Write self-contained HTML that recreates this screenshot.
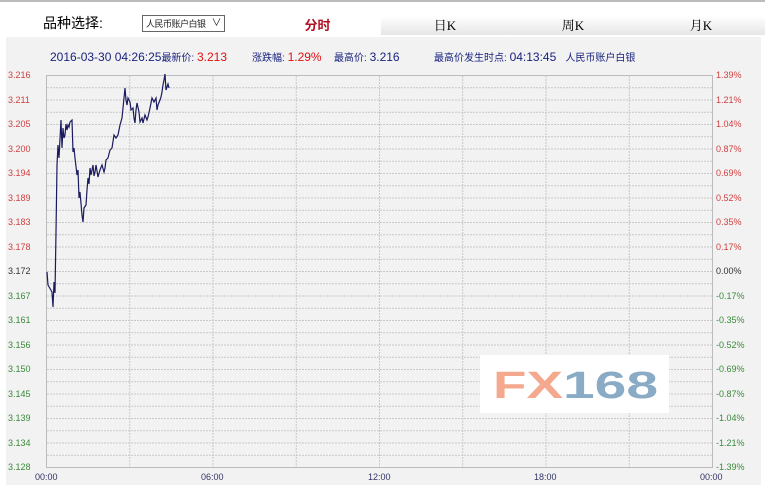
<!DOCTYPE html>
<html><head><meta charset="utf-8"><style>
body{margin:0;width:765px;height:488px;background:#fff;font-family:"Liberation Sans","Noto Sans CJK SC",sans-serif;position:relative;overflow:hidden}
.top{position:absolute;left:0;top:0;width:765px;height:2px;background:#bbb}
.lbl{position:absolute;left:43px;top:13px;font-size:14px;color:#000}
.sel{position:absolute;left:142px;top:15px;width:83px;height:17px;border:1px solid #666;font-size:9px;line-height:16px;box-sizing:border-box;padding-left:3px;color:#222;overflow:hidden;white-space:nowrap;letter-spacing:-0.5px}
.sel span{position:absolute;right:3px;top:0;font-size:10px}
.tabs{position:absolute;left:254px;top:16px;width:511px;height:19px}
.tab{position:absolute;top:0;height:19px;line-height:19px;font-size:13px;text-align:center;background:linear-gradient(#fff,#e6e6e6);font-family:"Liberation Serif","Noto Serif CJK SC",serif}
.panel{position:absolute;left:6px;top:37px;width:755px;height:448px;background:#f2f2f2}
.info{position:absolute;top:49px;font-size:11px;color:#1a237e;white-space:nowrap}
.r{color:#e01010}
.yl{position:absolute;font-size:9px;left:8px}
.yr{position:absolute;font-size:9px;left:716px}
.xl{position:absolute;top:472px;font-size:9px;color:#333366}
</style></head><body>
<div class="top"></div>
<div class="lbl">品种选择:</div>
<div class="sel">人民币账户白银<span>∨</span></div>
<div class="tabs">
<div class="tab" style="left:0;width:127px;background:#fff;color:#b01020;font-weight:bold;font-family:'Liberation Sans','Noto Sans CJK SC',sans-serif">分时</div>
<div class="tab" style="left:127px;width:128px">日K</div>
<div class="tab" style="left:255px;width:128px">周K</div>
<div class="tab" style="left:383px;width:128px">月K</div>
</div>
<div class="panel"></div>
<div class="info" style="left:50px;font-size:12px">2016-03-30 04:26:25<span style="font-size:10px">最新价: </span><span class="r" style="font-size:12px">3.213</span></div>
<div class="info" style="left:252px"><span style="font-size:10px">涨跌幅: </span><span class="r" style="font-size:12px">1.29%</span></div>
<div class="info" style="left:334px"><span style="font-size:10px">最高价: </span><span style="font-size:12px">3.216</span></div>
<div class="info" style="left:434px"><span style="font-size:10px">最高价发生时点: </span><span style="font-size:12px">04:13:45</span> <span style="font-size:10px;margin-left:6px">人民币账户白银</span></div>
<svg style="position:absolute;left:0;top:0" width="765" height="488">
<g stroke="#c8c8c8" stroke-dasharray="2,1" stroke-width="1" fill="none" id="g"></g>
<rect x="46.5" y="75.5" width="666" height="392" fill="none" stroke="#bbb"/>
<g id="v" stroke="#c8c8c8" stroke-dasharray="2,1"></g>
<rect x="480" y="355" width="189" height="58" fill="#fff"/>
<text x="493" y="398" font-family="Liberation Sans,sans-serif" font-weight="bold" font-size="38" fill="#f4a98e" textLength="70" lengthAdjust="spacingAndGlyphs">FX</text>
<text x="563" y="398" font-family="Liberation Sans,sans-serif" font-weight="bold" font-size="38" fill="#8aabc6" textLength="95" lengthAdjust="spacingAndGlyphs">168</text>
<polyline fill="none" stroke="#1a1a5e" stroke-width="1.2" points="47,272 48,285 52,292 53,307 54,282 55,293 56,232 57,165 58,145 59,158 61,120 62,148 63,128 64,138 65,135 66,124 67,130 68,125 69,127 70,122 72,120 73,152 74,148 75,158 77,175 78,170 79,198 80,192 82,215 83,222 84,208 86,205 87,190 88,178 89,184 90,168 91,175 93,165 94,176 95,172 96,165 98,177 100,170 102,165 104,172 105,168 106,160 108,158 110,150 112,148 114,135 116,138 118,135 120,125 122,118 123,108 125,88 126,100 127,105 128,98 130,102 131,110 133,108 134,118 135,123 136,110 137,103 139,112 140,122 142,118 143,123 145,115 147,120 148,117 150,108 152,98 154,102 156,98 157,110 158,105 160,100 161,97 162,92 163,85 164,80 165,74 166,90 167,87 168,84 169,88"/>
</svg>
<div id="labels"></div>
<script>
var g=document.getElementById('g'),s='';
for(var i=1;i<32;i++){var y=75.5+i*12.25;s+='<line x1="47" x2="712" y1="'+y+'" y2="'+y+'"/>';}
g.innerHTML=s;s='';
for(var j=1;j<8;j++){var x=46.5+j*83.25;s+='<line y1="76" y2="467" x1="'+x+'" x2="'+x+'"/>';}
document.getElementById('v').innerHTML=s;
var L=['3.216','3.211','3.205','3.200','3.194','3.189','3.183','3.178','3.172','3.167','3.161','3.156','3.150','3.145','3.139','3.134','3.128'];
var R=['1.39%','1.21%','1.04%','0.87%','0.69%','0.52%','0.35%','0.17%','0.00%','-0.17%','-0.35%','-0.52%','-0.69%','-0.87%','-1.04%','-1.21%','-1.39%'];
var h='';
for(var k=0;k<17;k++){var y=70+k*24.5;var c=k<8?'#d04040':(k==8?'#333':'#3a8a3a');
h+='<div class="yl" style="top:'+y+'px;color:'+c+'">'+L[k]+'</div><div class="yr" style="top:'+y+'px;color:'+c+'">'+R[k]+'</div>';}
var X=[['00:00',35],['06:00',201],['12:00',368],['18:00',534],['00:00',700]];
X.forEach(function(a){h+='<div class="xl" style="left:'+a[1]+'px">'+a[0]+'</div>';});
document.getElementById('labels').innerHTML=h;
</script>
</body></html>
